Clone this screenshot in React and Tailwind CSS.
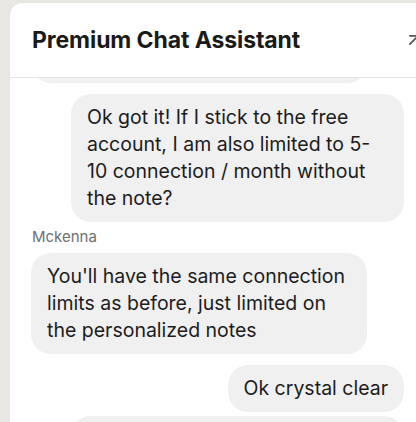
import React from 'react';
import { ArrowUpRight } from 'lucide-react';

const messages = [
  { id: 1, from: 'them', text: 'Yes, personalized notes are only included with the Premium plan.' },
  { id: 2, from: 'me', text: 'Ok got it! If I stick to the free account, I am also limited to 5-\u200B10 connection / month without the note?' },
  { id: 3, from: 'them', name: 'Mckenna', text: "You'll have the same connection limits as before, just limited on the personalized notes" },
  { id: 4, from: 'me', text: 'Ok crystal clear' },
  { id: 5, from: 'me', text: 'Thanks a lot for taking the time to explain all of this to me today!' },
];

const Bubble = ({ msg, grouped }) => (
  <div className={`flex flex-col ${msg.from === 'me' ? 'items-end' : 'items-start'} ${grouped ? 'mt-[4px]' : 'mt-[11px]'}`}>
    {msg.name && <p className="-mt-[6px] mb-[6px] ml-px text-[15px] leading-5 text-[#6e6e6e]">{msg.name}</p>}
    <div className={`${msg.from === 'me' ? 'max-w-[333px]' : 'max-w-[336px]'} rounded-[20px] bg-[#f0f0f0] px-4 py-[10px] text-[19.5px] leading-[27px] text-[#1c1c1c]`}>
      {msg.text}
    </div>
  </div>
);

export default function App() {
  return (
    <div className="h-[422px] w-[416px] overflow-hidden bg-[#e8e7e3] pl-[10px] pt-[3px]" style={{ fontFamily: 'Inter, "Noto Sans", sans-serif' }}>
      <div className="flex h-[440px] w-[430px] flex-col rounded-tl-[12px] bg-white shadow-[0_0_2px_rgba(0,0,0,0.06)]">
        <div className="flex h-[75px] shrink-0 items-center justify-between border-b border-[#e6e6e6] pl-[22px] pr-[16px]">
          <h1 className="text-[23px] font-bold tracking-[-0.1px] text-[#1a1a1a]">Premium Chat Assistant</h1>
          <ArrowUpRight size={20} strokeWidth={2} className="text-[#555]" />
        </div>
        <div className="relative flex-1 overflow-hidden">
          <div className="absolute inset-x-0 top-[-80px] flex flex-col pl-[21px] pr-[36px]">
            {messages.map((m, i) => (
              <Bubble key={m.id} msg={m} grouped={i > 0 && messages[i - 1].from === m.from} />
            ))}
          </div>
        </div>
      </div>
    </div>
  );
}
